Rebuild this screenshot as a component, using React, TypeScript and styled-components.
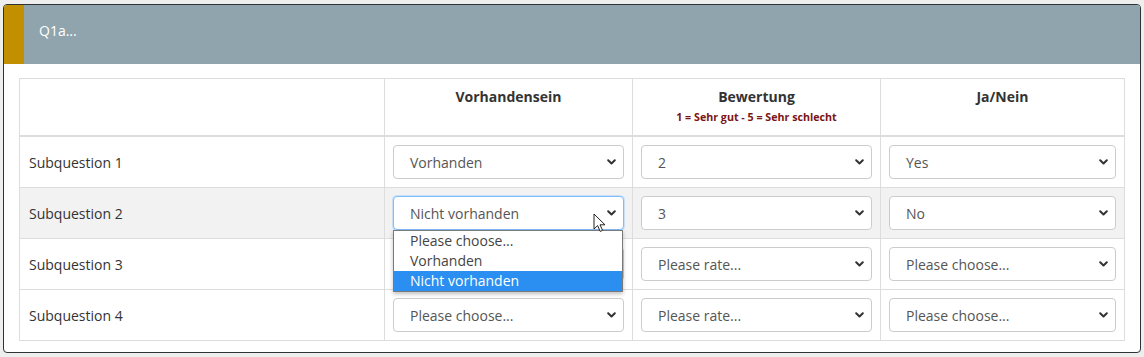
import styled, { createGlobalStyle } from "styled-components";

const GlobalStyle = createGlobalStyle`
  html, body {
    margin: 0;
    padding: 0;
    background: #eeeeee;
    font-family: "Open Sans", "Liberation Sans", sans-serif;
  }
`;

const Page = styled.div`
  padding: 4px 3px 3px 3px;
`;

const Card = styled.div`
  border: 1px solid #2f3336;
  border-radius: 4px;
  background: #ffffff;
`;

const Header = styled.div`
  display: flex;
  align-items: stretch;
  height: 59px;
  background: #90a4ae;
  border-radius: 3px 3px 0 0;
  overflow: hidden;
`;

const Stripe = styled.div`
  width: 20px;
  background: #c28f00;
`;

const Title = styled.div`
  padding: 16px 0 0 15px;
  color: #ffffff;
  font-size: 14px;
`;

const Body = styled.div`
  padding: 14px 15px 11px 15px;
`;

const Table = styled.table`
  width: 100%;
  border-collapse: collapse;
  table-layout: fixed;
  font-size: 14px;
  color: #333333;
`;

const Col = styled.col<{ $w?: number }>`
  width: ${(p) => (p.$w ? `${p.$w}px` : "auto")};
`;

const Th = styled.th`
  border: 1px solid #dddddd;
  border-bottom: 2px solid #dddddd;
  padding: 8px 8px 0 8px;
  height: 48px;
  vertical-align: top;
  text-align: center;
  font-weight: 700;
  font-size: 14px;
  color: #333333;
`;

const Hint = styled.div`
  margin-top: 4px;
  font-size: 10.7px;
  font-weight: 700;
  color: #7b1414;
`;

const Tr = styled.tr<{ $striped?: boolean }>`
  background: ${(p) => (p.$striped ? "#f2f2f2" : "#ffffff")};
`;

const LabelCell = styled.td`
  border: 1px solid #dddddd;
  padding: 0 9px;
  height: 50px;
  vertical-align: middle;
  color: #333333;
`;

const Cell = styled.td`
  position: relative;
  border: 1px solid #dddddd;
  padding: 8px;
  vertical-align: middle;
`;

const SelectBox = styled.div<{ $focused?: boolean }>`
  display: flex;
  align-items: center;
  justify-content: space-between;
  box-sizing: border-box;
  height: 34px;
  padding: 0 7px 0 16px;
  background: #ffffff;
  border: 1px solid ${(p) => (p.$focused ? "#80bdff" : "#cccccc")};
  border-radius: 4px;
  box-shadow: ${(p) =>
    p.$focused ? "0 0 0 1px rgba(128, 189, 255, 0.35)" : "none"};
  color: #555555;
  font-size: 14px;
`;

const Chevron = () => (
  <svg width="9" height="6" viewBox="0 0 9 6">
    <path
      d="M1.2 1.2 L4.5 4.5 L7.8 1.2"
      fill="none"
      stroke="#333"
      strokeWidth="2"
      strokeLinecap="round"
      strokeLinejoin="round"
    />
  </svg>
);

const Select = ({ value, focused }: { value: string; focused?: boolean }) => (
  <SelectBox $focused={focused}>
    <span>{value}</span>
    <Chevron />
  </SelectBox>
);

const Dropdown = styled.div`
  position: absolute;
  left: 8px;
  right: 9px;
  top: 42px;
  z-index: 5;
  background: #ffffff;
  border: 1px solid #7a7a7a;
  box-shadow: 0 2px 4px rgba(0, 0, 0, 0.25);
`;

const Option = styled.div<{ $active?: boolean }>`
  height: 20px;
  line-height: 20px;
  padding-left: 16px;
  font-size: 14px;
  background: ${(p) => (p.$active ? "#2a8ff0" : "transparent")};
  color: ${(p) => (p.$active ? "#ffffff" : "#444444")};
`;

const Cursor = styled.svg`
  position: absolute;
  left: 208px;
  top: 25px;
  z-index: 6;
`;

const rows = [
  { label: "Subquestion 1", a: "Vorhanden", b: "2", c: "Yes" },
  { label: "Subquestion 2", a: "Nicht vorhanden", b: "3", c: "No", open: true },
  // the first select of this row sits under the open list, so nothing of it shows
  { label: "Subquestion 3", a: "", b: "Please rate...", c: "Please choose..." },
  { label: "Subquestion 4", a: "Please choose...", b: "Please rate...", c: "Please choose..." },
];

export default function App() {
  return (
    <>
      <GlobalStyle />
      <Page>
        <Card>
          <Header>
            <Stripe />
            <Title>Q1a...</Title>
          </Header>
          <Body>
            <Table>
              <colgroup>
                <Col $w={365} />
                <Col $w={248} />
                <Col $w={248} />
                <Col />
              </colgroup>
              <thead>
                <tr>
                  <Th />
                  <Th>Vorhandensein</Th>
                  <Th>
                    Bewertung
                    <Hint>1 = Sehr gut - 5 = Sehr schlecht</Hint>
                  </Th>
                  <Th>Ja/Nein</Th>
                </tr>
              </thead>
              <tbody>
                {rows.map((r, i) => (
                  <Tr key={r.label} $striped={i === 1}>
                    <LabelCell>{r.label}</LabelCell>
                    <Cell>
                      <Select value={r.a} focused={r.open} />
                      {r.open && (
                        <>
                          <Cursor width="14" height="20" viewBox="0 0 14 20">
                            <path
                              d="M1 1 L1 16 L4.6 12.6 L7.2 18.4 L9.6 17.4 L7 11.8 L12 11.8 Z"
                              fill="#ffffff"
                              stroke="#222"
                              strokeWidth="1"
                              strokeLinejoin="round"
                            />
                          </Cursor>
                          <Dropdown>
                            <Option>Please choose...</Option>
                            <Option>Vorhanden</Option>
                            <Option $active>Nicht vorhanden</Option>
                          </Dropdown>
                        </>
                      )}
                    </Cell>
                    <Cell>
                      <Select value={r.b} />
                    </Cell>
                    <Cell>
                      <Select value={r.c} />
                    </Cell>
                  </Tr>
                ))}
              </tbody>
            </Table>
          </Body>
        </Card>
      </Page>
    </>
  );
}
